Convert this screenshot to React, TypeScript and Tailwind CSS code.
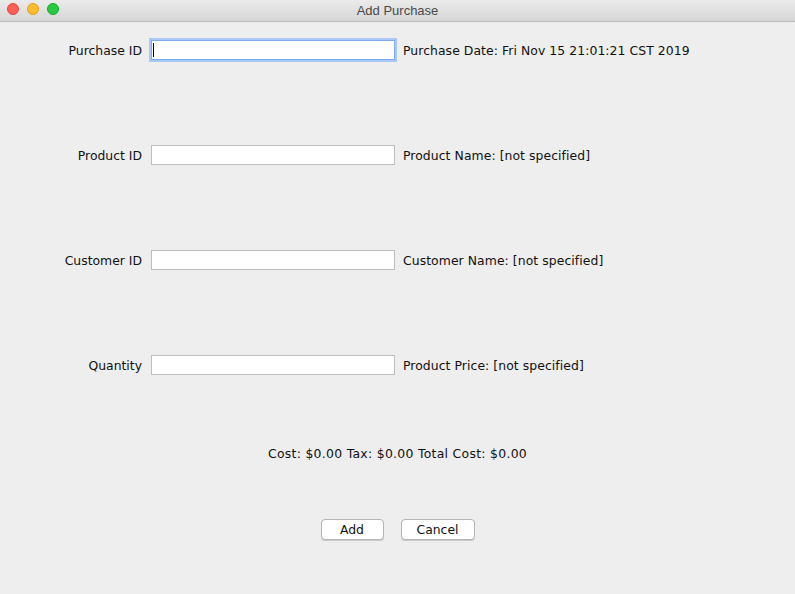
import type { ReactNode } from "react";

const font = { fontFamily: '"DejaVu Sans", "Liberation Sans", Arial, sans-serif' };

function Field({ focused }: { focused?: boolean }) {
  return (
    <div
      className={
        focused
          ? "relative h-[20px] w-[244px] border border-[#7eaaf0] bg-white shadow-[0_0_0_2px_#a9c8f5]"
          : "h-[20px] w-[244px] border border-[#bdbdbd] bg-white"
      }
    >
      {focused ? <span className="absolute left-[1px] top-[2px] h-[14px] w-[1px] bg-black" /> : null}
    </div>
  );
}

function Row({ label, info, focused }: { label: string; info: ReactNode; focused?: boolean }) {
  return (
    <div className="flex h-[20px] items-center">
      <span className="w-[142px] pt-[2px] text-right">{label}</span>
      <div className="ml-[9px]">
        <Field focused={focused} />
      </div>
      <span className="ml-[8px] pt-[2px] tracking-[0.07px]">{info}</span>
    </div>
  );
}

export default function App() {
  return (
    <div className="flex h-[594px] w-[795px] flex-col overflow-hidden bg-[#eeeeee] text-[12.4px] text-[#111111]" style={font}>
      <div
        className="relative flex h-[22px] shrink-0 items-center justify-center border-b border-[#b9b9b9] bg-gradient-to-b from-[#ebebeb] to-[#d6d6d6]"
        style={{ fontFamily: '"Liberation Sans", Arial, sans-serif' }}
      >
        <div className="absolute left-[7px] top-[3px] flex gap-[8px]">
          <span className="h-[12px] w-[12px] rounded-full border border-[#e2463f] bg-[#fe5f57]" />
          <span className="h-[12px] w-[12px] rounded-full border border-[#e1a116] bg-[#febc2e]" />
          <span className="h-[12px] w-[12px] rounded-full border border-[#12ac28] bg-[#28c840]" />
        </div>
        <span className="text-[13px] text-[#4a4a4a]">Add Purchase</span>
      </div>

      <div className="flex flex-col pt-[18px]">
        <Row label="Purchase ID" info="Purchase Date: Fri Nov 15 21:01:21 CST 2019" focused />
        <div className="mt-[85px]">
          <Row label="Product ID" info="Product Name: [not specified]" />
        </div>
        <div className="mt-[85px]">
          <Row label="Customer ID" info="Customer Name: [not specified]" />
        </div>
        <div className="mt-[85px]">
          <Row label="Quantity" info="Product Price: [not specified]" />
        </div>

        <div className="mt-[70px] flex h-[16px] items-center justify-center pt-[2px] tracking-[0.3px]">
          Cost: $0.00 Tax: $0.00 Total Cost: $0.00
        </div>

        <div className="mt-[58px] flex justify-center gap-[17px]">
          <button
            type="button"
            className="flex h-[21px] w-[63px] items-center justify-center rounded-[4px] border border-[#b5b5b5] bg-white pt-[2px] shadow-[0_1px_0_#c8c8c8]"
          >
            Add
          </button>
          <button
            type="button"
            className="flex h-[21px] w-[74px] items-center justify-center rounded-[4px] border border-[#b5b5b5] bg-white pt-[2px] shadow-[0_1px_0_#c8c8c8]"
          >
            Cancel
          </button>
        </div>
      </div>
    </div>
  );
}
